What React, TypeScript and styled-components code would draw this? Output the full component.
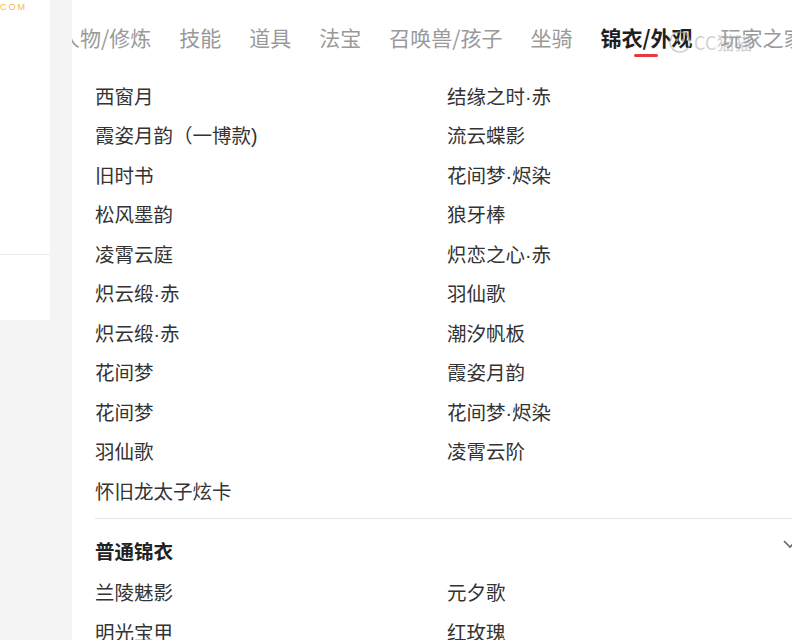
import React, { FC } from "react";
import styled, { createGlobalStyle } from "styled-components";

const GlobalStyle = createGlobalStyle`
  html, body {
    margin: 0;
    padding: 0;
    background: #f4f4f4;
  }
  body {
    font-family: "Noto Sans CJK SC", "Noto Sans", sans-serif;
  }
`;

const tabs = ["人物/修炼", "技能", "道具", "法宝", "召唤兽/孩子", "坐骑", "锦衣/外观", "玩家之家"];
const activeTab = "锦衣/外观";

const limited = [
  "西窗月",
  "结缘之时·赤",
  "霞姿月韵（一博款)",
  "流云蝶影",
  "旧时书",
  "花间梦·烬染",
  "松风墨韵",
  "狼牙棒",
  "凌霄云庭",
  "炽恋之心·赤",
  "炽云缎·赤",
  "羽仙歌",
  "炽云缎·赤",
  "潮汐帆板",
  "花间梦",
  "霞姿月韵",
  "花间梦",
  "花间梦·烬染",
  "羽仙歌",
  "凌霄云阶",
  "怀旧龙太子炫卡"
];

const common = ["兰陵魅影", "元夕歌", "明光宝甲", "红玫瑰"];

const Page = styled.div`
  display: flex;
  width: 792px;
  height: 640px;
  overflow: hidden;
  background: #f4f4f4;
`;

const Sidebar = styled.aside`
  width: 72px;
  flex-shrink: 0;
`;

const SideCard = styled.div`
  width: 50px;
  height: 320px;
  background: #fff;
  display: flex;
  flex-direction: column;
`;

const Brand = styled.div`
  padding-top: 2px;
  height: 252px;
  font-family: "Liberation Sans", sans-serif;
  font-size: 9px;
  letter-spacing: 2px;
  color: #f1bb45;
  line-height: 10px;
`;

const SideDivider = styled.div`
  height: 1px;
  background: #ececec;
`;

const Main = styled.main`
  flex: 1;
  background: #fff;
  overflow: hidden;
  position: relative;
`;

const TabBar = styled.nav`
  height: 76px;
  display: flex;
  align-items: flex-start;
  gap: 28px;
  margin-left: -13px;
  white-space: nowrap;
`;

const Tab = styled.div<{ $active?: boolean }>`
  position: relative;
  padding-top: 22px;
  font-size: 21px;
  line-height: 30px;
  color: ${p => (p.$active ? "#1f1f1f" : "#999")};
  font-weight: ${p => (p.$active ? 700 : 400)};
  flex-shrink: 0;

  &:after {
    content: "";
    display: ${p => (p.$active ? "block" : "none")};
    position: absolute;
    left: 50%;
    top: 54px;
    width: 24px;
    height: 3px;
    margin-left: -13px;
    border-radius: 2px;
    background: #e8373d;
  }
`;

const Watermark = styled.div`
  position: absolute;
  left: 596px;
  top: 29px;
  display: flex;
  align-items: center;
  gap: 2px;
  color: rgba(170, 170, 170, 0.55);
  font-size: 18px;
  pointer-events: none;
`;

const Section = styled.section`
  padding-left: 23px;
`;

const Grid = styled.div`
  display: grid;
  grid-template-columns: 352px 1fr;
`;

const Item = styled.div`
  box-sizing: border-box;
  font-family: "Liberation Sans", "Noto Sans CJK SC", sans-serif;
  font-size: 19.5px;
  line-height: 39.5px;
  height: 39.5px;
  padding-top: 1.5px;
  color: #333;
  white-space: nowrap;
`;

const Divider = styled.div`
  height: 1px;
  background: #e6e6e6;
  margin-top: 7px;
`;

const SectionHead = styled.div`
  display: flex;
  align-items: center;
  justify-content: space-between;
  height: 40px;
  margin-top: 12px;
  margin-bottom: 2px;
`;

const SectionTitle = styled.h3`
  margin: 0;
  font-size: 19.5px;
  font-weight: 700;
  color: #222;
  line-height: 40px;
`;

const Chevron = styled.svg`
  margin-right: -6px;
  margin-top: -14px;
`;

const App: FC = () => {
  return (
    <>
      <GlobalStyle />
      <Page>
        <Sidebar>
          <SideCard>
            <Brand>COM</Brand>
            <SideDivider />
          </SideCard>
        </Sidebar>
        <Main>
          <TabBar>
            {tabs.map(t => (
              <Tab key={t} $active={t === activeTab}>
                {t}
              </Tab>
            ))}
          </TabBar>
          <Watermark>
            <svg width="24" height="24" viewBox="0 0 24 24" fill="none" stroke="currentColor" strokeWidth="1.6">
              <circle cx="12" cy="12" r="10" />
              <circle cx="9" cy="10" r="1" fill="currentColor" />
              <circle cx="15" cy="10" r="1" fill="currentColor" />
            </svg>
            <span>CC猫猫</span>
          </Watermark>
          <Section>
            <Grid>
              {limited.map((name, i) => (
                <Item key={i}>{name}</Item>
              ))}
            </Grid>
            <Divider />
            <SectionHead>
              <SectionTitle>普通锦衣</SectionTitle>
              <Chevron width="16" height="10" viewBox="0 0 16 10" fill="none" stroke="#666" strokeWidth="1.6">
                <polyline points="2,2 8,8 14,2" />
              </Chevron>
            </SectionHead>
            <Grid>
              {common.map((name, i) => (
                <Item key={i}>{name}</Item>
              ))}
            </Grid>
          </Section>
        </Main>
      </Page>
    </>
  );
};

export default App;
